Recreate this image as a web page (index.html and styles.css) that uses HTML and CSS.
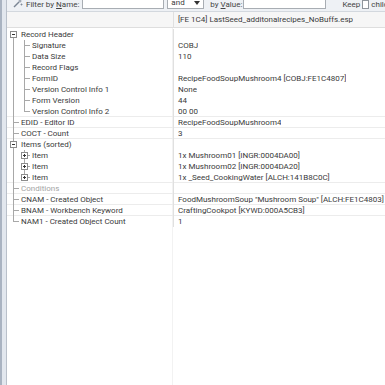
FILE: index.html
```html
<!DOCTYPE html>
<html lang="en">
<head>
    <meta charset="UTF-8">
    <title>Record View</title>
    <link rel="stylesheet" href="styles.css">
</head>
<body>
    <div class="window">
        <div class="frame"></div>
        <div class="content">
            <!-- Filter bar -->
            <div class="toolbar">
                <svg class="tool-icon" width="10" height="9" viewBox="0 0 10 9">
                    <path d="M1 8L6 3" stroke="#7a8594" stroke-width="1.4"/>
                    <path d="M7 0.5V3.5M5.5 2H8.5M8.5 4.5V6.5M7.5 5.5H9.5" stroke="#7a8594" stroke-width="0.8"/>
                </svg>
                <span class="label name-label">Filter by <u>N</u>ame:</span>
                <span class="input name-input"></span>
                <span class="select">and<svg width="6" height="4" viewBox="0 0 6 4"><path d="M0 0H6L3 4Z" fill="#333"/></svg></span>
                <span class="label value-label">by <u>V</u>alue:</span>
                <span class="input value-input"></span>
                <span class="label keep">Keep</span>
                <span class="check"></span>
                <span class="label children">children</span>
            </div>

            <!-- Record tree -->
            <div class="view">
                <div class="row head">
                    <div class="name"></div>
                    <div class="value">[FE 1C4] LastSeed_additonalrecipes_NoBuffs.esp</div>
                </div>

                <div class="row">
                    <div class="name"><svg class="box" width="11" height="11"><path d="M5.5 9V11" stroke="#a8a8a8"/><rect x="2.5" y="2.5" width="6" height="6" fill="#fff" stroke="#8c8c8c"/><path d="M4 5.5H7" stroke="#333"/></svg><span class="text">Record Header</span></div>
                    <div class="value"></div>
                </div>
                <div class="row">
                    <div class="name"><span class="g pipe"></span><span class="g tee"></span><span class="text">Signature</span></div>
                    <div class="value">COBJ</div>
                </div>
                <div class="row">
                    <div class="name"><span class="g pipe"></span><span class="g tee"></span><span class="text">Data Size</span></div>
                    <div class="value">110</div>
                </div>
                <div class="row">
                    <div class="name"><span class="g pipe"></span><span class="g tee"></span><span class="text">Record Flags</span></div>
                    <div class="value"></div>
                </div>
                <div class="row">
                    <div class="name"><span class="g pipe"></span><span class="g tee"></span><span class="text">FormID</span></div>
                    <div class="value">RecipeFoodSoupMushroom4 [COBJ:FE1C4807]</div>
                </div>
                <div class="row">
                    <div class="name"><span class="g pipe"></span><span class="g tee"></span><span class="text">Version Control Info 1</span></div>
                    <div class="value">None</div>
                </div>
                <div class="row">
                    <div class="name"><span class="g pipe"></span><span class="g tee"></span><span class="text">Form Version</span></div>
                    <div class="value">44</div>
                </div>
                <div class="row sep">
                    <div class="name"><span class="g pipe"></span><span class="g end"></span><span class="text">Version Control Info 2</span></div>
                    <div class="value">00 00</div>
                </div>
                <div class="row sep">
                    <div class="name"><span class="g tee"></span><span class="text">EDID - Editor ID</span></div>
                    <div class="value">RecipeFoodSoupMushroom4</div>
                </div>
                <div class="row sep">
                    <div class="name"><span class="g tee"></span><span class="text">COCT - Count</span></div>
                    <div class="value">3</div>
                </div>
                <div class="row">
                    <div class="name"><svg class="box" width="11" height="11"><path d="M5.5 0V2M5.5 9V11" stroke="#a8a8a8"/><rect x="2.5" y="2.5" width="6" height="6" fill="#fff" stroke="#8c8c8c"/><path d="M4 5.5H7" stroke="#333"/></svg><span class="text">Items (sorted)</span></div>
                    <div class="value"></div>
                </div>
                <div class="row">
                    <div class="name"><span class="g pipe"></span><svg class="box" width="11" height="11"><path d="M5.5 0V2M5.5 9V11M9 5.5H11" stroke="#a8a8a8"/><rect x="2.5" y="2.5" width="6" height="6" fill="#fff" stroke="#8c8c8c"/><path d="M4 5.5H7M5.5 4V7" stroke="#333"/></svg><span class="text">Item</span></div>
                    <div class="value">1x Mushroom01 [INGR:0004DA00]</div>
                </div>
                <div class="row">
                    <div class="name"><span class="g pipe"></span><svg class="box" width="11" height="11"><path d="M5.5 0V2M5.5 9V11M9 5.5H11" stroke="#a8a8a8"/><rect x="2.5" y="2.5" width="6" height="6" fill="#fff" stroke="#8c8c8c"/><path d="M4 5.5H7M5.5 4V7" stroke="#333"/></svg><span class="text">Item</span></div>
                    <div class="value">1x Mushroom02 [INGR:0004DA20]</div>
                </div>
                <div class="row sep">
                    <div class="name"><span class="g pipe"></span><svg class="box" width="11" height="11"><path d="M5.5 0V2M9 5.5H11" stroke="#a8a8a8"/><rect x="2.5" y="2.5" width="6" height="6" fill="#fff" stroke="#8c8c8c"/><path d="M4 5.5H7M5.5 4V7" stroke="#333"/></svg><span class="text">Item</span></div>
                    <div class="value">1x _Seed_CookingWater [ALCH:141B8C0C]</div>
                </div>
                <div class="row sep">
                    <div class="name"><span class="g tee"></span><span class="text muted">Conditions</span></div>
                    <div class="value"></div>
                </div>
                <div class="row sep">
                    <div class="name"><span class="g tee"></span><span class="text">CNAM - Created Object</span></div>
                    <div class="value">FoodMushroomSoup "Mushroom Soup" [ALCH:FE1C4803]</div>
                </div>
                <div class="row sep">
                    <div class="name"><span class="g tee"></span><span class="text">BNAM - Workbench Keyword</span></div>
                    <div class="value">CraftingCookpot [KYWD:000A5CB3]</div>
                </div>
                <div class="row">
                    <div class="name"><span class="g end"></span><span class="text">NAM1 - Created Object Count</span></div>
                    <div class="value">1</div>
                </div>
            </div>
        </div>
    </div>
</body>
</html>
```

FILE: styles.css
```css
body {
    margin: 0;
    background: #fff;
    color: #3a3a3a;
    font-family: Roboto, "Liberation Sans", sans-serif;
    font-size: 8px;
}
.window {
    display: flex;
    height: 385px;
    overflow: hidden;
}
.frame {
    width: 4px;
    flex: none;
    border-left: 2px solid #a9b3c1;
    border-right: 1px solid #b9c0ca;
    background: #e2e7ee;
}
.content {
    flex: 1;
    display: flex;
    flex-direction: column;
    min-width: 0;
}

/* filter bar */
.toolbar {
    height: 12px;
    flex: none;
    display: flex;
    align-items: flex-end;
    padding: 0 0 2px 6px;
    box-sizing: border-box;
    background: #eef1f5;
    border-bottom: 1px solid #d3d8de;
    overflow: hidden;
    white-space: nowrap;
}
.tool-icon {
    flex: none;
    margin-bottom: 1px;
}
.label {
    flex: none;
    color: #444;
    line-height: 9px;
}
.name-label {
    margin-left: 3px;
}
.value-label {
    margin-left: 6px;
}
.keep {
    margin-left: 16px;
}
.children {
    margin-left: 2px;
}
.input {
    flex: none;
    height: 16px;
    background: #fff;
    border: 1px solid #a8adb3;
    box-sizing: border-box;
}
.name-input {
    width: 82px;
    margin-left: 3px;
}
.value-input {
    width: 83px;
    margin-left: 1px;
}
.select {
    flex: none;
    width: 37px;
    height: 16px;
    margin-left: 3px;
    display: flex;
    align-items: flex-end;
    justify-content: space-between;
    padding: 0 3px 1px 3px;
    background: #fff;
    border: 1px solid #a8adb3;
    box-sizing: border-box;
    line-height: 9px;
}
.select svg {
    margin-bottom: 2px;
}
.check {
    flex: none;
    width: 7px;
    height: 9px;
    background: #fff;
    border: 1px solid #8f959c;
    box-sizing: border-box;
    margin-left: 2px;
}

/* tree */
.view {
    flex: 1;
    background: linear-gradient(to right, transparent 165px, #f2f2f2 165px, #f2f2f2 166px, transparent 166px);
}
.row {
    display: flex;
    height: 11px;
    line-height: 11px;
    white-space: nowrap;
}
.row.sep {
    box-shadow: inset 0 -1px 0 #ececec;
}
.row.head {
    height: 16px;
    line-height: 15px;
    background: #f6f6f6;
    border-bottom: 1px solid #dedede;
    box-sizing: border-box;
    margin-bottom: 1px;
}
.name {
    width: 165px;
    flex: none;
    display: flex;
    padding-left: 1px;
    border-right: 1px solid #e0e0e0;
    overflow: hidden;
}
.value {
    padding-left: 4px;
    overflow: hidden;
}
.text {
    padding-left: 2px;
}
.muted {
    color: #a3a3a3;
}
.box {
    flex: none;
}
.g {
    width: 11px;
    height: 11px;
    flex: none;
}
.pipe {
    background: linear-gradient(#a8a8a8, #a8a8a8) no-repeat 5px 0 / 1px 100%;
}
.tee {
    background:
        linear-gradient(#a8a8a8, #a8a8a8) no-repeat 5px 0 / 1px 100%,
        linear-gradient(#a8a8a8, #a8a8a8) no-repeat 5px 5px / 6px 1px;
}
.end {
    background:
        linear-gradient(#a8a8a8, #a8a8a8) no-repeat 5px 0 / 1px 6px,
        linear-gradient(#a8a8a8, #a8a8a8) no-repeat 5px 5px / 6px 1px;
}
```
